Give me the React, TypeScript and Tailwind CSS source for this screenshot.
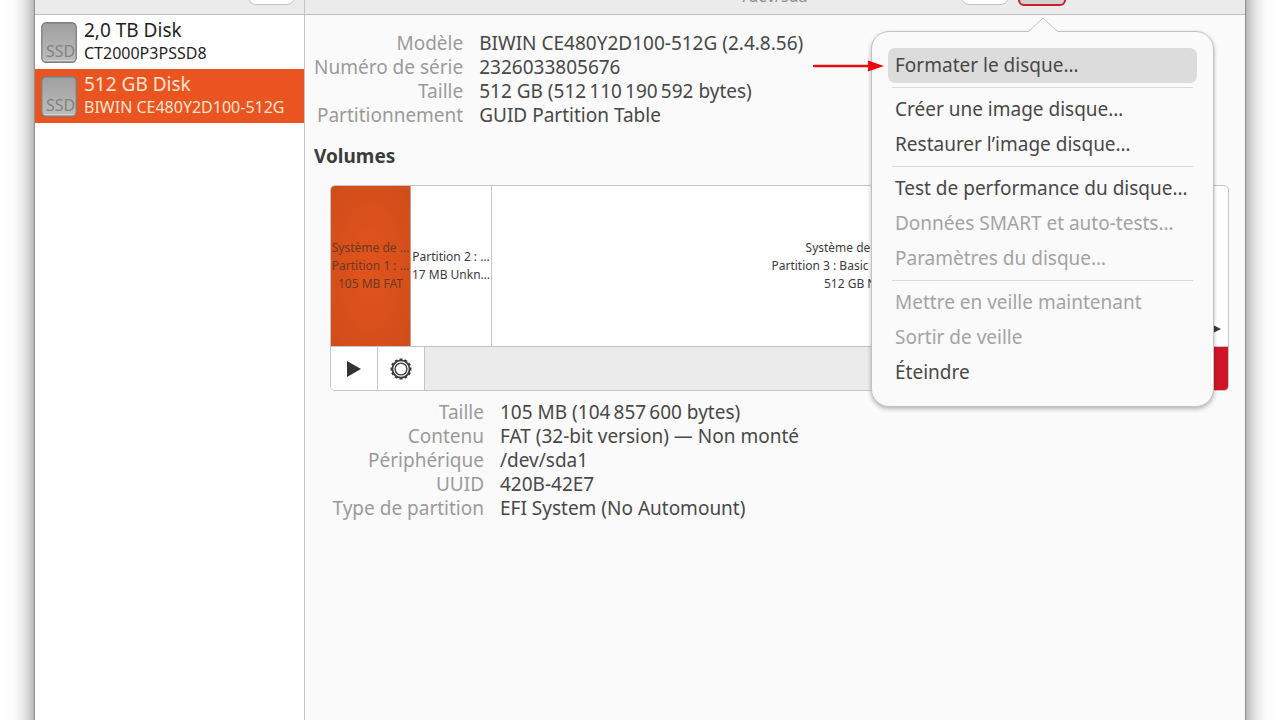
import React from "react";

type Disk = { name: string; model: string; selected?: boolean };
type Row = [label: string, value: string];
type MenuEntry = { label: string; disabled?: boolean; active?: boolean };

const disks: Disk[] = [
  { name: "2,0 TB Disk", model: "CT2000P3PSSD8" },
  { name: "512 GB Disk", model: "BIWIN CE480Y2D100-512G", selected: true },
];

const driveInfo: Row[] = [
  ["Modèle", "BIWIN CE480Y2D100-512G (2.4.8.56)"],
  ["Numéro de série", "2326033805676"],
  ["Taille", "512 GB (512\u202f110\u202f190\u202f592 bytes)"],
  ["Partitionnement", "GUID Partition Table"],
];

const volumeInfo: Row[] = [
  ["Taille", "105 MB (104\u202f857\u202f600 bytes)"],
  ["Contenu", "FAT (32-bit version) — Non monté"],
  ["Périphérique", "/dev/sda1"],
  ["UUID", "420B-42E7"],
  ["Type de partition", "EFI System (No Automount)"],
];

const menuGroups: MenuEntry[][] = [
  [{ label: "Formater le disque…", active: true }],
  [{ label: "Créer une image disque…" }, { label: "Restaurer l’image disque…" }],
  [
    { label: "Test de performance du disque…" },
    { label: "Données SMART et auto-tests…", disabled: true },
    { label: "Paramètres du disque…", disabled: true },
  ],
  [
    { label: "Mettre en veille maintenant", disabled: true },
    { label: "Sortir de veille", disabled: true },
    { label: "Éteindre" },
  ],
];

function SsdIcon() {
  return (
    <svg width="36" height="41" viewBox="0 0 36 41" className="shrink-0" aria-hidden="true">
      <defs>
        <linearGradient id="ssd" x1="0" y1="0" x2="0" y2="1">
          <stop offset="0" stopColor="#9f9f9f" />
          <stop offset="1" stopColor="#bdbdbd" />
        </linearGradient>
      </defs>
      <rect x="0.75" y="0.75" width="34.5" height="39.5" rx="4.5" fill="url(#ssd)" stroke="#7d7d7d" strokeWidth="1.3" />
      <path d="M3 38.6h30" stroke="#d6d6d6" strokeWidth="1" />
      <text x="5" y="35" fontSize="16" fill="#828282" fontFamily="Noto Sans, sans-serif">
        SSD
      </text>
    </svg>
  );
}

function GearIcon() {
  const teeth = Array.from({ length: 12 }, (_, i) => i * 30);
  return (
    <svg width="22" height="22" viewBox="0 0 22 22" fill="none" stroke="#3b3b3b" aria-hidden="true">
      <circle cx="11" cy="11" r="8.6" strokeWidth="1.8" />
      <circle cx="11" cy="11" r="5.9" strokeWidth="1.4" />
      {teeth.map((a) => (
        <path key={a} d="M9.5 1.3h3" strokeWidth="1.6" transform={`rotate(${a} 11 11)`} />
      ))}
    </svg>
  );
}

function InfoList({ rows, columns }: { rows: Row[]; columns: string }) {
  return (
    <dl className={"grid w-max gap-x-4 text-[19px] leading-6 whitespace-nowrap " + columns}>
      {rows.map(([label, value]) => (
        <React.Fragment key={label}>
          <dt className="text-right text-[#9a9a9a]">{label}</dt>
          <dd className="text-[#484848]">{value}</dd>
        </React.Fragment>
      ))}
    </dl>
  );
}

function DiskMenu() {
  return (
    <div className="absolute top-full -right-[148px] z-10 mt-[25px] w-[343px] rounded-[18px] border border-[#c2c2c2] bg-[#fafafa] p-4 shadow-[0_2px_4px_rgba(0,0,0,0.28)]">
      <svg width="30" height="16" viewBox="0 0 30 16" className="absolute -top-[15px] left-[156px]" aria-hidden="true">
        <path d="M0 15.5L1 14.5L15 1L29 14.5L30 15.5V16H0Z" fill="#fafafa" />
        <path d="M0.5 14.5L15 1L29.5 14.5" fill="none" stroke="#c2c2c2" />
      </svg>
      <svg width="72" height="12" viewBox="0 0 72 12" className="absolute -left-[59px] top-7" aria-hidden="true">
        <path d="M1 6H58" stroke="#e01010" strokeWidth="2.4" strokeLinecap="round" />
        <path d="M55 0.5L71 6L55 11.5Z" fill="#e80c0c" />
      </svg>
      {menuGroups.map((group, i) => (
        <div key={i} role="group">
          {i > 0 && <hr className="mx-1 my-1 border-[#d9d9d9]" />}
          {group.map((item) => (
            <button
              key={item.label}
              type="button"
              disabled={item.disabled}
              className={
                "block h-[35px] w-full rounded-[7px] px-[7px] text-left text-[19px] leading-6 whitespace-nowrap text-[#484848] disabled:text-[#a3a3a3] " +
                (item.active ? "bg-[#dcdcdc]" : "")
              }
            >
              {item.label}
            </button>
          ))}
        </div>
      ))}
    </div>
  );
}

export default function App() {
  return (
    <div className="flex h-screen overflow-hidden bg-white px-[35px] font-['Noto_Sans','Open_Sans',sans-serif]">
      <div className="-mt-[41px] -mb-10 flex flex-1 flex-col bg-[#fafafa] shadow-[0_0_0_1px_#8f8f8f,0_0_22px_rgba(0,0,0,0.6)]">
        <header className="flex h-14 shrink-0 border-b border-[#bfbfbf] bg-[#ebebeb]">
          <div className="flex w-[270px] shrink-0 items-center justify-end border-r border-[#c4c4c4] px-[9px]">
            <button type="button" aria-label="Menu principal" className="h-9 w-[47px] rounded-lg border border-[#c6c6c6] bg-white" />
          </div>
          <div className="grid flex-1 grid-cols-[1fr_auto_1fr] items-center">
            <p className="col-start-2 self-end pb-2 text-[16px] leading-5 text-[#8c8c8c]">/dev/sda</p>
            <div className="mr-[179px] flex items-center justify-end gap-[9px]">
              <button type="button" aria-label="Réduire" className="h-9 w-12 rounded-lg border border-[#c6c6c6] bg-white" />
              <div className="relative">
                <button type="button" aria-label="Options du disque" className="block h-[38px] w-12 rounded-md border-2 border-[#c8202a] bg-[#d2d2d2]" />
                <DiskMenu />
              </div>
            </div>
          </div>
        </header>

        <div className="flex flex-1">
          <nav className="w-[270px] shrink-0 border-r border-[#c4c4c4] bg-white">
            {disks.map((disk) => (
              <button
                key={disk.name}
                type="button"
                className={
                  "flex h-[54px] w-full items-center gap-[7px] px-[6px] text-left whitespace-nowrap " +
                  (disk.selected ? "bg-[#e95420] text-[#ffe3d0]" : "text-[#1f1f1f]")
                }
              >
                <SsdIcon />
                <span>
                  <span className="block text-[19px] leading-[22px]">{disk.name}</span>
                  <span className="block text-[16px] leading-6">{disk.model}</span>
                </span>
              </button>
            ))}
          </nav>

          <main className="min-w-0 flex-1 pt-4 pr-4 pl-[9px]">
            <InfoList rows={driveInfo} columns="grid-cols-[auto_auto]" />
            <h2 className="mt-[17px] text-[19px] leading-6 font-bold text-[#3b3b3b]">Volumes</h2>

            <section className="mt-[17px] ml-4">
              <div className="overflow-hidden rounded-[5px] border border-[#c4c4c4] bg-white text-center text-[12px] leading-[18px] whitespace-nowrap text-[#3b3b3b]">
                <div className="flex h-40">
                  <button type="button" className="flex w-20 shrink-0 flex-col items-center justify-center border-r border-[#c4a090] bg-radial from-[#e2531d] to-[#cf4d1a] text-[#6b3a20]">
                    <span>Système de …</span>
                    <span>Partition 1 : …</span>
                    <span>105 MB FAT</span>
                  </button>
                  <button type="button" className="flex w-[81px] shrink-0 flex-col items-center justify-center border-r border-[#c4c4c4]">
                    <span>Partition 2 : …</span>
                    <span>17 MB Unkn…</span>
                  </button>
                  <button type="button" className="relative flex flex-1 flex-col items-center justify-center">
                    <span>Système de fichiers</span>
                    <span>Partition 3 : Basic data partition</span>
                    <span>512 GB NTFS</span>
                    <svg width="12" height="12" viewBox="0 0 12 12" className="absolute right-[7px] bottom-[11px]" aria-hidden="true">
                      <path d="M0 0L12 6L0 12Z" fill="#3b3b3b" />
                    </svg>
                  </button>
                </div>
                <div className="flex h-11 border-t border-[#c4c4c4] bg-[#ebebeb]">
                  <button type="button" aria-label="Monter" className="flex w-[47px] items-center justify-center border-r border-[#c4c4c4] bg-white">
                    <svg width="14" height="16" viewBox="0 0 14 16" aria-hidden="true">
                      <path d="M0 0L14 8L0 16Z" fill="#333" />
                    </svg>
                  </button>
                  <button type="button" aria-label="Options de partition" className="flex w-[47px] items-center justify-center border-r border-[#c4c4c4] bg-white">
                    <GearIcon />
                  </button>
                  <button type="button" aria-label="Supprimer la partition" className="ml-auto w-[47px] bg-[#cf1628]" />
                </div>
              </div>
              <div className="mt-[9px]">
                <InfoList rows={volumeInfo} columns="grid-cols-[154px_auto]" />
              </div>
            </section>
          </main>
        </div>
      </div>
    </div>
  );
}
